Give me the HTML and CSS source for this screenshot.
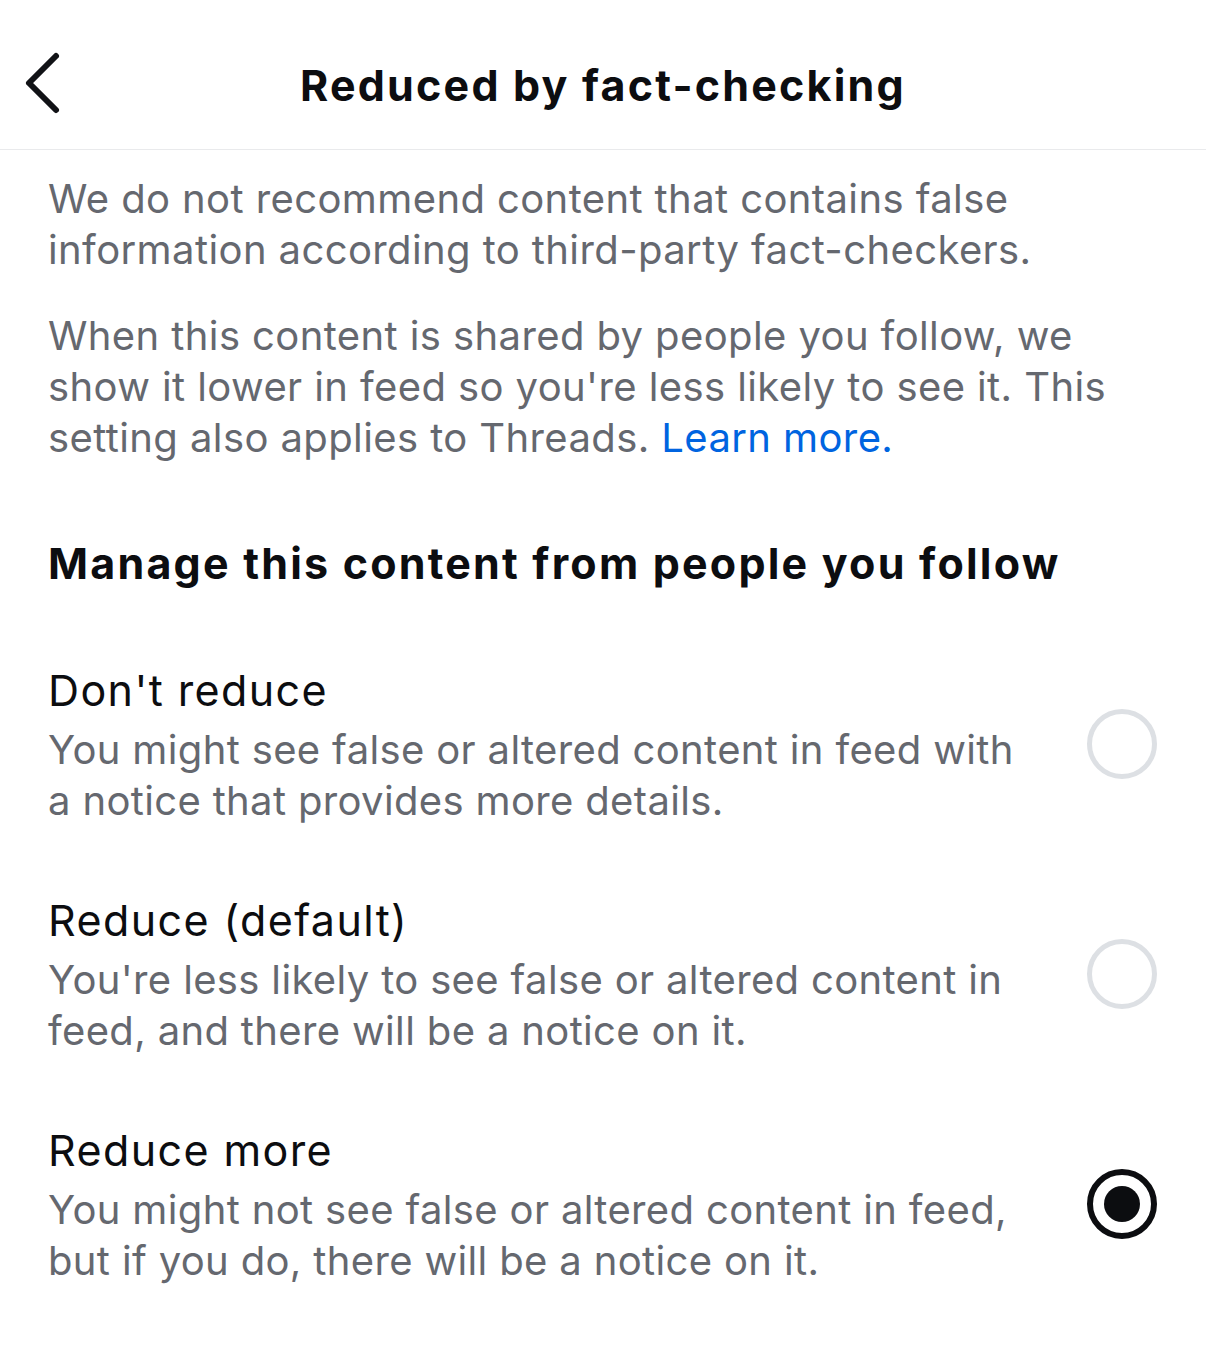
FILE: index.html
```html
<!DOCTYPE html>
<html>
<head>
    <title>Reduced by fact-checking</title>
    <link rel="stylesheet" href="styles.css">
</head>
<body>
    <div class="header">
        <div class="back">
            <svg width="44" height="64" viewBox="0 0 44 64">
                <path d="M33 5 L6 32 L33 59" fill="none" stroke="#111216" stroke-width="6" stroke-linecap="round" stroke-linejoin="round"/>
            </svg>
        </div>
        <h1>Reduced by fact-checking</h1>
        <div></div>
    </div>

    <div class="content">
        <p class="intro">We do not recommend content that contains false information according to third-party fact-checkers.</p>
        <p class="intro second">When this content is shared by people you follow, we show it lower in feed so you're less likely to see it. This setting also applies to Threads. <a href="#">Learn more.</a></p>

        <h2>Manage this content from people you follow</h2>

        <div class="options">
            <div class="option">
                <div class="option-text">
                    <div class="option-title">Don't reduce</div>
                    <div class="option-desc">You might see false or altered content in feed with a notice that provides more details.</div>
                </div>
                <div class="radio"></div>
            </div>
            <div class="option">
                <div class="option-text">
                    <div class="option-title">Reduce (default)</div>
                    <div class="option-desc">You're less likely to see false or altered content in feed, and there will be a notice on it.</div>
                </div>
                <div class="radio"></div>
            </div>
            <div class="option">
                <div class="option-text">
                    <div class="option-title">Reduce more</div>
                    <div class="option-desc">You might not see false or altered content in feed, but if you do, there will be a notice on it.</div>
                </div>
                <div class="radio checked"></div>
            </div>
        </div>
    </div>
</body>
</html>
```

FILE: styles.css
```css
body {
    margin: 0;
    background: #ffffff;
    font-family: Inter, "Noto Sans", sans-serif;
    color: #0c0d10;
}
.header {
    height: 150px;
    border-bottom: 1px solid #e9eaec;
    display: grid;
    grid-template-columns: 1fr auto 1fr;
    align-items: center;
    box-sizing: border-box;
}
.back {
    padding-left: 23px;
    padding-top: 16px;
    display: flex;
}
.header h1 {
    margin: 0;
    font-size: 43px;
    font-weight: 700;
    letter-spacing: 2.2px;
    padding-top: 20px;
}
.content {
    padding: 23px 49px 0 48px;
}
.intro {
    margin: 0;
    font-size: 40px;
    line-height: 51px;
    color: #65686f;
    letter-spacing: 0.4px;
}
.intro.second {
    margin-top: 35px;
}
.intro a {
    color: #0064e0;
    text-decoration: none;
}
h2 {
    margin: 70px 0 0;
    font-size: 43px;
    line-height: 60px;
    font-weight: 700;
    letter-spacing: 2.2px;
}
.options {
    margin-top: 63px;
    display: flex;
    flex-direction: column;
    gap: 60px;
}
.option {
    display: flex;
    align-items: center;
    justify-content: space-between;
}
.option-text {
    width: 990px;
}
.option-title {
    font-size: 43px;
    line-height: 68px;
    letter-spacing: 1.4px;
}
.option-desc {
    font-size: 40px;
    line-height: 51px;
    color: #65686f;
    letter-spacing: 0.35px;
}
.radio {
    width: 70px;
    height: 70px;
    border: 5px solid #dde0e4;
    border-radius: 50%;
    box-sizing: border-box;
    margin-top: 6px;
    flex-shrink: 0;
    position: relative;
}
.radio.checked {
    border: 6px solid #0c0d10;
}
.radio.checked::after {
    content: "";
    position: absolute;
    left: 11px;
    top: 11px;
    width: 36px;
    height: 36px;
    border-radius: 50%;
    background: #0c0d10;
}
```
